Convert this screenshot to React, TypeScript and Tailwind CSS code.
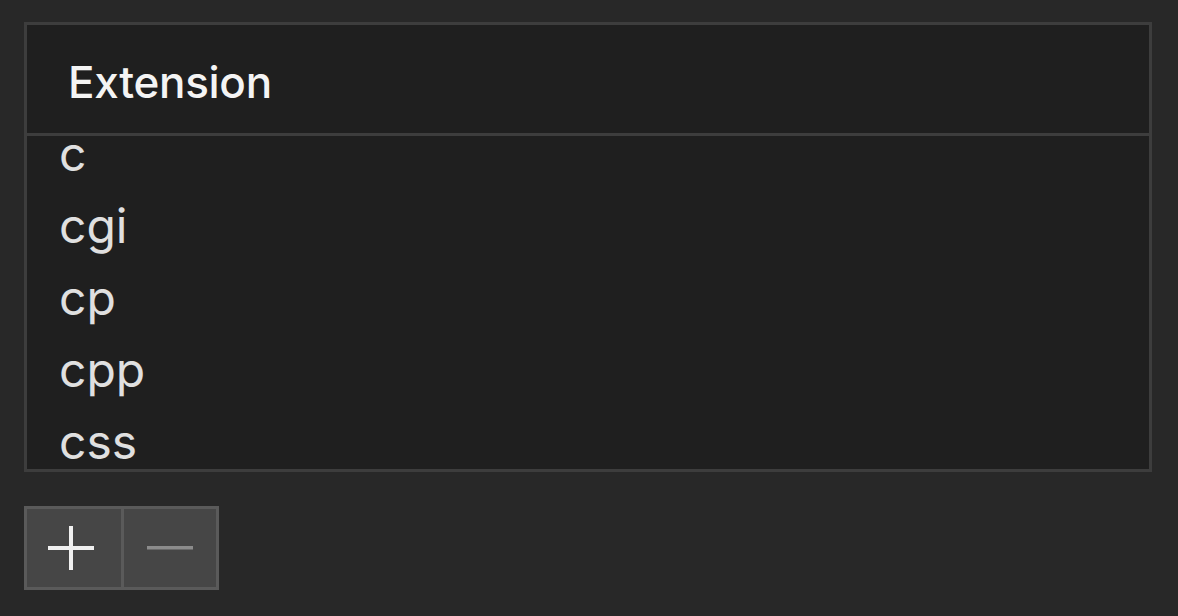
import React from "react";

const rows = ["c", "cgi", "cp", "cpp", "css"];

export default function App() {
  return (
    <div
      className="w-[1178px] h-[616px] bg-[#282828] overflow-hidden pl-[24px] pt-[22px]"
      style={{ fontFamily: 'Inter, "Liberation Sans", Arial, sans-serif' }}
    >
      <div className="w-[1128px] h-[450px] border-[3px] border-[#3d3d3d] bg-[#1f1f1f] flex flex-col">
        <div className="h-[111px] shrink-0 pl-[41px] pt-[35px] border-b-[3px] border-[#3d3d3d]">
          <div className="text-[44px] leading-[44px] font-medium tracking-[-0.3px] text-[#f4f4f4]">
            Extension
          </div>
        </div>
        <div className="flex-1 overflow-hidden">
          <div className="mt-[-18px] pl-[32px]">
            {rows.map((r) => (
              <div key={r} className="h-[72px] pt-[21px]">
                <div className="text-[48px] leading-[30px] text-[#e0e0e0]">{r}</div>
              </div>
            ))}
          </div>
        </div>
      </div>
      <div className="mt-[34px] flex w-fit border-[3px] border-[#5a5a5a] bg-[#464646]">
        <div className="w-[94px] h-[78px] pr-[6px] flex items-center justify-center">
          <svg width="46" height="44" viewBox="0 0 46 44">
            <rect x="0" y="20" width="46" height="4" fill="#f0f0f0" />
            <rect x="21" y="0" width="4" height="44" fill="#f0f0f0" />
          </svg>
        </div>
        <div className="w-[95px] h-[78px] border-l-[3px] border-[#5a5a5a] flex items-center justify-center">
          <svg width="46" height="4" viewBox="0 0 46 4">
            <rect x="0" y="0" width="46" height="3.5" fill="#8c8c8c" />
          </svg>
        </div>
      </div>
    </div>
  );
}
